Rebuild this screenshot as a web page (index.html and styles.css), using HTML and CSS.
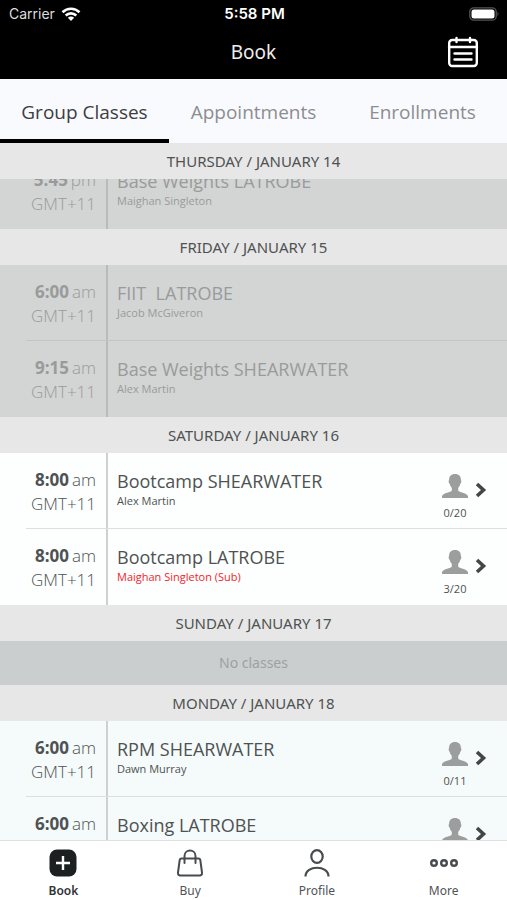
FILE: index.html
```
<!DOCTYPE html>
<html lang="en">
<head>
    <meta charset="UTF-8">
    <meta name="viewport" content="width=device-width, initial-scale=1.0">
    <title>Book</title>
    <link rel="stylesheet" href="styles.css">
</head>
<body>
    <svg class="sprite" aria-hidden="true">
        <symbol id="person" viewBox="0 0 26 24">
            <path d="M13 0C9 0 6.900 2.500 7.100 6.200C6.300 6.300 6.600 9.300 7.700 9.700C8 11.500 8.800 12.800 9.800 13.700V16.500C9 18.800 1.500 18.600 0 22V24H26V22C24.500 18.600 17 18.800 16.200 16.500V13.700C17.200 12.800 18 11.500 18.300 9.700C19.400 9.300 19.700 6.300 18.900 6.200C19.100 2.500 17 0 13 0Z" fill="#9b9e9d"/>
        </symbol>
        <symbol id="chevron" viewBox="0 0 12 16">
            <path d="M2 2L8.500 8L2 14" fill="none" stroke="#444646" stroke-width="3.600"/>
        </symbol>
    </svg>

    <header class="top">
        <div class="status">
            <div class="carrier">
                <span>Carrier</span>
                <svg width="20" height="14" viewBox="0 0 20 14" fill="none" stroke="#fff" stroke-width="2.600">
                    <path d="M1.500 5.200C6.300 0.600 13.700 0.600 18.500 5.200"/>
                    <path d="M4.700 8.500C7.700 5.600 12.300 5.600 15.300 8.500"/>
                    <path d="M10 14L6.900 10.700C8.700 9.200 11.300 9.200 13.100 10.700Z" fill="#fff" stroke="none"/>
                </svg>
            </div>
            <span class="clock">5:58 PM</span>
            <div class="battery">
                <svg width="31" height="14" viewBox="0 0 31 14">
                    <rect x="0.800" y="0.800" width="26.400" height="12.400" rx="4" fill="none" stroke="#555" stroke-width="1.300"/>
                    <rect x="2.500" y="2.500" width="23" height="9" rx="2.500" fill="#fff"/>
                    <path d="M28.500 4.800Q30.500 7 28.500 9.200Z" fill="#555"/>
                </svg>
            </div>
        </div>
        <div class="nav">
            <h1>Book</h1>
            <button class="calendar" aria-label="Schedule">
                <svg width="32" height="32" viewBox="0 0 32 32" fill="none" stroke="#fff" stroke-width="2.400" stroke-linecap="round">
                    <rect x="2.200" y="4" width="27.600" height="26" rx="3"/>
                    <path d="M2 11H30M9.500 2V6M23 2V6M7.500 17.500H24.500M7.500 23.500H24.500"/>
                </svg>
            </button>
        </div>
    </header>

    <nav class="tabs">
        <a href="#group" class="tab active">Group Classes</a>
        <a href="#appointments" class="tab">Appointments</a>
        <a href="#enrollments" class="tab">Enrollments</a>
    </nav>

    <main class="schedule">
        <h2 class="day">THURSDAY / JANUARY 14</h2>
        <div class="classes past scrolled">
            <div class="class">
                <div class="time"><div><b>5:45</b><span>pm</span></div><div>GMT+11</div></div>
                <div class="info"><div class="name">Base Weights LATROBE</div><div class="coach">Maighan Singleton</div></div>
            </div>
        </div>

        <h2 class="day">FRIDAY / JANUARY 15</h2>
        <div class="classes past">
            <div class="class">
                <div class="time"><div><b>6:00</b><span>am</span></div><div>GMT+11</div></div>
                <div class="info"><div class="name">FIIT&nbsp; LATROBE</div><div class="coach">Jacob McGiveron</div></div>
            </div>
            <div class="class">
                <div class="time"><div><b>9:15</b><span>am</span></div><div>GMT+11</div></div>
                <div class="info"><div class="name">Base Weights SHEARWATER</div><div class="coach">Alex Martin</div></div>
            </div>
        </div>

        <h2 class="day">SATURDAY / JANUARY 16</h2>
        <div class="classes">
            <div class="class">
                <div class="time"><div><b>8:00</b><span>am</span></div><div>GMT+11</div></div>
                <div class="info"><div class="name">Bootcamp SHEARWATER</div><div class="coach">Alex Martin</div></div>
                <div class="spots"><svg class="person"><use href="#person"/></svg><span>0/20</span></div>
                <svg class="chevron"><use href="#chevron"/></svg>
            </div>
            <div class="class">
                <div class="time"><div><b>8:00</b><span>am</span></div><div>GMT+11</div></div>
                <div class="info"><div class="name">Bootcamp LATROBE</div><div class="coach sub">Maighan Singleton (Sub)</div></div>
                <div class="spots"><svg class="person"><use href="#person"/></svg><span>3/20</span></div>
                <svg class="chevron"><use href="#chevron"/></svg>
            </div>
        </div>

        <h2 class="day">SUNDAY / JANUARY 17</h2>
        <p class="empty">No classes</p>

        <h2 class="day">MONDAY / JANUARY 18</h2>
        <div class="classes tinted">
            <div class="class">
                <div class="time"><div><b>6:00</b><span>am</span></div><div>GMT+11</div></div>
                <div class="info"><div class="name">RPM SHEARWATER</div><div class="coach">Dawn Murray</div></div>
                <div class="spots"><svg class="person"><use href="#person"/></svg><span>0/11</span></div>
                <svg class="chevron"><use href="#chevron"/></svg>
            </div>
            <div class="class">
                <div class="time"><div><b>6:00</b><span>am</span></div></div>
                <div class="info"><div class="name">Boxing LATROBE</div></div>
                <div class="spots"><svg class="person"><use href="#person"/></svg></div>
                <svg class="chevron"><use href="#chevron"/></svg>
            </div>
        </div>
    </main>

    <nav class="tabbar">
        <a href="#book" class="item active">
            <svg width="28" height="28" viewBox="0 0 28 28">
                <rect x="0.500" y="0.500" width="27" height="27" rx="7.500" fill="#1d2021"/>
                <path d="M14 7V21M7 14H21" stroke="#fff" stroke-width="2.400"/>
            </svg>
            <span>Book</span>
        </a>
        <a href="#buy" class="item">
            <svg width="28" height="28" viewBox="0 0 28 28" fill="none" stroke="#484c4f" stroke-width="2" stroke-linecap="round" stroke-linejoin="round">
                <path d="M5.500 9.500H22.500Q24 9.500 24.300 11L26 23.500Q26.300 26.500 23.500 26.500H4.500Q1.700 26.500 2 23.500L3.700 11Q4 9.500 5.500 9.500Z"/>
                <path d="M8.500 14V7C8.500 -0.300 19.500 -0.300 19.500 7V14"/>
            </svg>
            <span>Buy</span>
        </a>
        <a href="#profile" class="item">
            <svg width="28" height="28" viewBox="0 0 28 28" fill="none" stroke="#484c4f" stroke-width="2.200">
                <ellipse cx="14" cy="7.500" rx="5.700" ry="6.400"/>
                <path d="M2.500 27.500C2.500 15.800 25.500 15.800 25.500 27.500"/>
            </svg>
            <span>Profile</span>
        </a>
        <a href="#more" class="item">
            <svg width="28" height="28" viewBox="0 0 28 28" fill="none" stroke="#484c4f" stroke-width="2.400">
                <circle cx="4" cy="14" r="2.800"/>
                <circle cx="14" cy="14" r="2.800"/>
                <circle cx="24" cy="14" r="2.800"/>
            </svg>
            <span>More</span>
        </a>
    </nav>
</body>
</html>
```

FILE: styles.css
```
* {
    box-sizing: border-box;
}
body {
    margin: 0;
    height: 100vh;
    display: flex;
    flex-direction: column;
    overflow: hidden;
    font-family: "Open Sans", "Noto Sans", sans-serif;
    color: #4f5252;
    background: white;
}
a {
    color: inherit;
    text-decoration: none;
}
h1, h2, p {
    margin: 0;
    font-weight: 400;
}
.sprite {
    position: absolute;
    width: 0;
    height: 0;
}
.top {
    height: 79px;
    flex: none;
    background: black;
    color: white;
}
.status {
    display: grid;
    grid-template-columns: 1fr auto 1fr;
    align-items: center;
    height: 27px;
    padding: 0 7px 0 9px;
    font-family: Inter, sans-serif;
    font-size: 14px;
}
.carrier {
    display: flex;
    align-items: center;
    gap: 6px;
    color: #ddd;
}
.clock {
    font-size: 15px;
    font-weight: 600;
}
.battery {
    display: flex;
    justify-content: flex-end;
}
.nav {
    display: grid;
    grid-template-columns: 1fr auto 1fr;
    align-items: center;
    height: 50px;
    padding: 0 28px;
}
.nav h1 {
    grid-column: 2;
    font-family: "Noto Sans", sans-serif;
    font-size: 19px;
    color: #eee;
}
.calendar {
    justify-self: end;
    display: flex;
    padding: 0;
    border: none;
    background: none;
    cursor: pointer;
}
.tabs {
    display: flex;
    flex: none;
    height: 64px;
    background: #f9fafd;
    font-size: 19px;
    color: #8c8d91;
}
.tab {
    flex: 1;
    display: flex;
    align-items: center;
    justify-content: center;
    padding-top: 5px;
    border-bottom: 4px solid transparent;
    white-space: nowrap;
}
.tab.active {
    color: #3c3d40;
    border-bottom-color: black;
}
.schedule {
    flex: 1;
    min-height: 0;
    overflow: hidden;
}
.day {
    background: #e7e7e7;
    text-align: center;
    font-family: "Noto Sans", sans-serif;
    font-size: 15px;
    line-height: 36px;
}
.classes {
    background: #fcfffe;
}
.classes.tinted {
    background: #f5fafa;
}
.classes.past {
    background: #d3d4d4;
    color: #999b9b;
}
/* first day is partly scrolled under its header */
.scrolled {
    display: flex;
    flex-direction: column;
    justify-content: flex-end;
    height: 50px;
    overflow: hidden;
}
.class {
    display: flex;
    flex: none;
    height: 76px;
    margin-left: 26px;
    padding-right: 20px;
    border-bottom: 1px solid #dcdfdf;
}
.past .class {
    border-bottom-color: #c3c5c5;
}
.class:last-child {
    border-bottom: none;
}
.time {
    width: 82px;
    padding: 15px 10px 0 0;
    border-right: 2px solid #cfd1d1;
    font-size: 17px;
    line-height: 24px;
    font-weight: 300;
}
.time div {
    display: flex;
    justify-content: flex-end;
    gap: 3px;
}
.past .time {
    border-right-color: #b9bbbb;
}
.time b {
    font-weight: 700;
}
.info {
    flex: 1;
    padding: 15px 0 0 9px;
}
.name {
    font-size: 18px;
    line-height: 26px;
}
.coach {
    font-size: 11px;
    line-height: 14px;
}
.coach.sub {
    color: #f5222a;
}
.spots {
    width: 28px;
    margin-right: 6px;
    padding-top: 21px;
    display: flex;
    flex-direction: column;
    align-items: center;
    gap: 7px;
    font-size: 11px;
    line-height: 16px;
}
.person {
    width: 26px;
    height: 24px;
    flex: none;
}
.chevron {
    width: 12px;
    height: 16px;
    margin-top: 29px;
}
.empty {
    background: #cacecf;
    color: #9da1a2;
    text-align: center;
    font-family: "Noto Sans", sans-serif;
    font-size: 14px;
    line-height: 44px;
}
.tabbar {
    display: flex;
    flex: none;
    height: 60px;
    border-top: 1px solid #dfe1e1;
    background: white;
    font-family: "Noto Sans", sans-serif;
    font-size: 12px;
    line-height: 16px;
    color: #505356;
}
.item {
    flex: 1;
    display: flex;
    flex-direction: column;
    align-items: center;
    gap: 6px;
    padding-top: 8px;
}
.item.active {
    font-weight: 600;
    color: #303336;
}
```
